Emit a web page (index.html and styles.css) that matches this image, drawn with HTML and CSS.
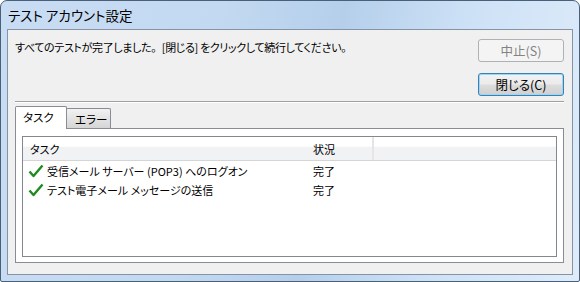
FILE: index.html
```html
<!DOCTYPE html>
<html lang="ja">
<head>
    <meta charset="UTF-8">
    <title>テスト アカウント設定</title>
    <link rel="stylesheet" href="styles.css">
</head>
<body>
    <div class="window">
        <div class="titlebar">テスト アカウント設定</div>
        <div class="client">
            <div class="top-row">
                <p class="message">すべてのテストが完了しました<span class="wide">。</span>[閉じる] をクリックして続行してください。</p>
                <div class="buttons">
                    <button class="btn" disabled>中止(S)</button>
                    <button class="btn default">閉じる(C)</button>
                </div>
            </div>
            <div class="separator"></div>
            <div class="tabs">
                <div class="tab active">タスク</div>
                <div class="tab">エラー</div>
            </div>
            <div class="panel">
                <div class="list">
                    <div class="list-head">
                        <div class="col-task">タスク</div>
                        <div class="col-status">状況</div>
                        <div class="col-rest"></div>
                    </div>
                    <div class="list-row">
                        <div class="col-task">
                            <svg class="check" width="16" height="14" viewBox="0 0 16 14"><path d="M1.5 7.5 L5.5 12 L14.5 1.5" fill="none" stroke="#1f8a1f" stroke-width="2.4" stroke-linejoin="round"/></svg>
                            <span>受信メール サーバー (POP3) へのログオン</span>
                        </div>
                        <div class="col-status">完了</div>
                    </div>
                    <div class="list-row">
                        <div class="col-task">
                            <svg class="check" width="16" height="14" viewBox="0 0 16 14"><path d="M1.5 7.5 L5.5 12 L14.5 1.5" fill="none" stroke="#1f8a1f" stroke-width="2.4" stroke-linejoin="round"/></svg>
                            <span>テスト電子メール メッセージの送信</span>
                        </div>
                        <div class="col-status">完了</div>
                    </div>
                </div>
            </div>
        </div>
    </div>
</body>
</html>
```

FILE: styles.css
```css
* {
    margin: 0;
    padding: 0;
    box-sizing: border-box;
}

body {
    font-family: "Noto Sans CJK JP", "Noto Sans", sans-serif;
    font-size: 11px;
    font-feature-settings: "palt";
    color: #000;
    background-color: #fff;
}

.window {
    width: 580px;
    height: 282px;
    display: flex;
    flex-direction: column;
    border: 1px solid #4a5f78;
    border-radius: 7px 7px 2px 2px;
    background: linear-gradient(100deg, #c8ddf4 0%, #c3d9f1 35%, #b5cfeb 55%, #cde1f6 75%, #deecfa 100%);
    padding: 0 6px 6px;
}

.titlebar {
    height: 28px;
    display: flex;
    align-items: center;
    padding-left: 1px;
    font-size: 13.5px;
    white-space: pre;
}

.client {
    flex: 1;
    border: 1px solid #8593a5;
    background-color: #f0f0f0;
    padding: 0 8px 11px 7px;
    display: flex;
    flex-direction: column;
}

.top-row {
    display: flex;
    justify-content: space-between;
    height: 71px;
}

.message {
    padding-top: 9px;
    line-height: 16px;
    letter-spacing: -0.35px;
    white-space: pre;
}

.wide {
    font-feature-settings: normal;
}

.buttons {
    display: flex;
    flex-direction: column;
    gap: 11px;
    padding-top: 9px;
}

.btn {
    width: 86px;
    height: 23px;
    font-family: inherit;
    font-size: 12.5px;
    font-feature-settings: "palt";
    border: 1px solid #707070;
    border-radius: 3px;
    background: linear-gradient(#f2f2f2 0%, #ebebeb 48%, #dddddd 52%, #cfcfcf 100%);
    color: #000;
}

.btn:disabled {
    border-color: #adb2b5;
    background: #f4f4f4;
    color: #838383;
}

.btn.default {
    border-color: #3c7fb1;
    box-shadow: inset 0 0 0 1px #9ad6f6;
}

.separator {
    height: 2px;
    border-top: 1px solid #a0a0a0;
    border-bottom: 1px solid #fff;
    margin-bottom: 3px;
}

.tabs {
    display: flex;
    align-items: flex-end;
    height: 22px;
    position: relative;
    z-index: 1;
    font-size: 11.5px;
}

.tab {
    height: 20px;
    width: 45px;
    padding-left: 8px;
    border: 1px solid #898c95;
    border-bottom: none;
    border-radius: 2px 2px 0 0;
    background: linear-gradient(#f2f2f2, #d5d5d5);
    display: flex;
    align-items: center;
    margin-left: -1px;
    white-space: nowrap;
}

.tab.active {
    height: 23px;
    width: 52px;
    padding-left: 7px;
    background: #fff;
    margin-left: 0;
    margin-bottom: -1px;
    padding-bottom: 2px;
}

.panel {
    flex: 1;
    border: 1px solid #898c95;
    background-color: #fff;
    padding: 7px 6px 5px;
}

.list {
    height: 100%;
    border: 1px solid #828790;
}

.list-head {
    display: flex;
    height: 24px;
    background: linear-gradient(#ffffff 0%, #ffffff 40%, #f1f2f4 45%, #f1f2f4 100%);
    border-bottom: 1px solid #d5d5d5;
}

.list-head > div {
    display: flex;
    align-items: center;
}

.list-head .col-task {
    padding-left: 7px;
}

.list-head .col-status {
    border-right: 2px solid #e5e5e5;
}

.col-task {
    width: 282px;
}

.col-status {
    width: 69px;
    padding-left: 8px;
}

.col-rest {
    flex: 1;
}

.list-row {
    display: flex;
    height: 19px;
    align-items: center;
}

.list-row:first-of-type {
    margin-top: 1px;
}

.list-row .col-task {
    display: flex;
    align-items: center;
    padding-left: 5px;
    gap: 3px;
    white-space: pre;
}

.check {
    flex-shrink: 0;
}
```
